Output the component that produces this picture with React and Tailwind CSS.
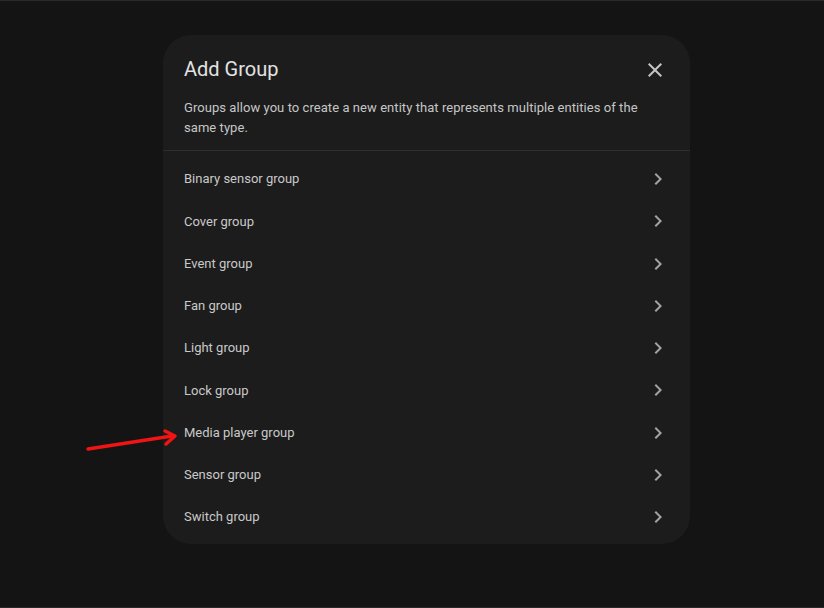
import React from "react";

const items = [
  "Binary sensor group",
  "Cover group",
  "Event group",
  "Fan group",
  "Light group",
  "Lock group",
  "Media player group",
  "Sensor group",
  "Switch group",
];

function Chevron() {
  return (
    <svg width="24" height="24" viewBox="0 0 24 24" className="shrink-0">
      <path d="M8.59 16.59L13.17 12 8.59 7.41 10 6l6 6-6 6z" fill="#a3a3a3" />
    </svg>
  );
}

export default function App() {
  return (
    <div
      className="relative w-[824px] h-[608px] bg-[#141414] border-t border-b border-[#2a2a2a] overflow-hidden"
      style={{ fontFamily: "Roboto, 'Noto Sans', sans-serif" }}
    >
      <div className="ml-[163px] mt-[34px] w-[527px] bg-[#1c1c1c] rounded-[28px] flex flex-col">
        <div className="pt-5 pl-[21px] pr-[23px] pb-[12px]">
          <div className="flex items-center justify-between h-[28px]">
            <h2 className="text-[20px] leading-[28px] text-[#e3e3e3] font-normal">Add Group</h2>
            <svg width="24" height="24" viewBox="0 0 24 24" className="mt-[2px]">
              <path
                d="M19 6.41L17.59 5 12 10.59 6.41 5 5 6.41 10.59 12 5 17.59 6.41 19 12 13.41 17.59 19 19 17.59 13.41 12z"
                fill="#c4c4c4"
              />
            </svg>
          </div>
          <p className="mt-[15px] text-[13px] leading-[20px] text-[#c6c6c6] tracking-[0.06px]">
            Groups allow you to create a new entity that represents multiple entities of the same type.
          </p>
        </div>
        <div className="h-px bg-[#2e2e2e]" />
        <ul className="pt-[7px] pb-[6px]">
          {items.map((t) => (
            <li
              key={t}
              className="h-[42.25px] flex items-center justify-between pl-[21px] pr-5"
            >
              <span className="text-[13px] text-[#c9c9c9]">{t}</span>
              <Chevron />
            </li>
          ))}
        </ul>
      </div>
      <svg
        className="absolute left-0 top-0 pointer-events-none"
        width="824"
        height="608"
        viewBox="0 0 824 608"
      >
        <line x1="88" y1="448" x2="172" y2="435" stroke="#f01414" strokeWidth="3.5" strokeLinecap="round" />
        <path d="M165 430 L175 435 L166 443" fill="none" stroke="#f01414" strokeWidth="3.5" strokeLinecap="round" strokeLinejoin="round" />
      </svg>
    </div>
  );
}
